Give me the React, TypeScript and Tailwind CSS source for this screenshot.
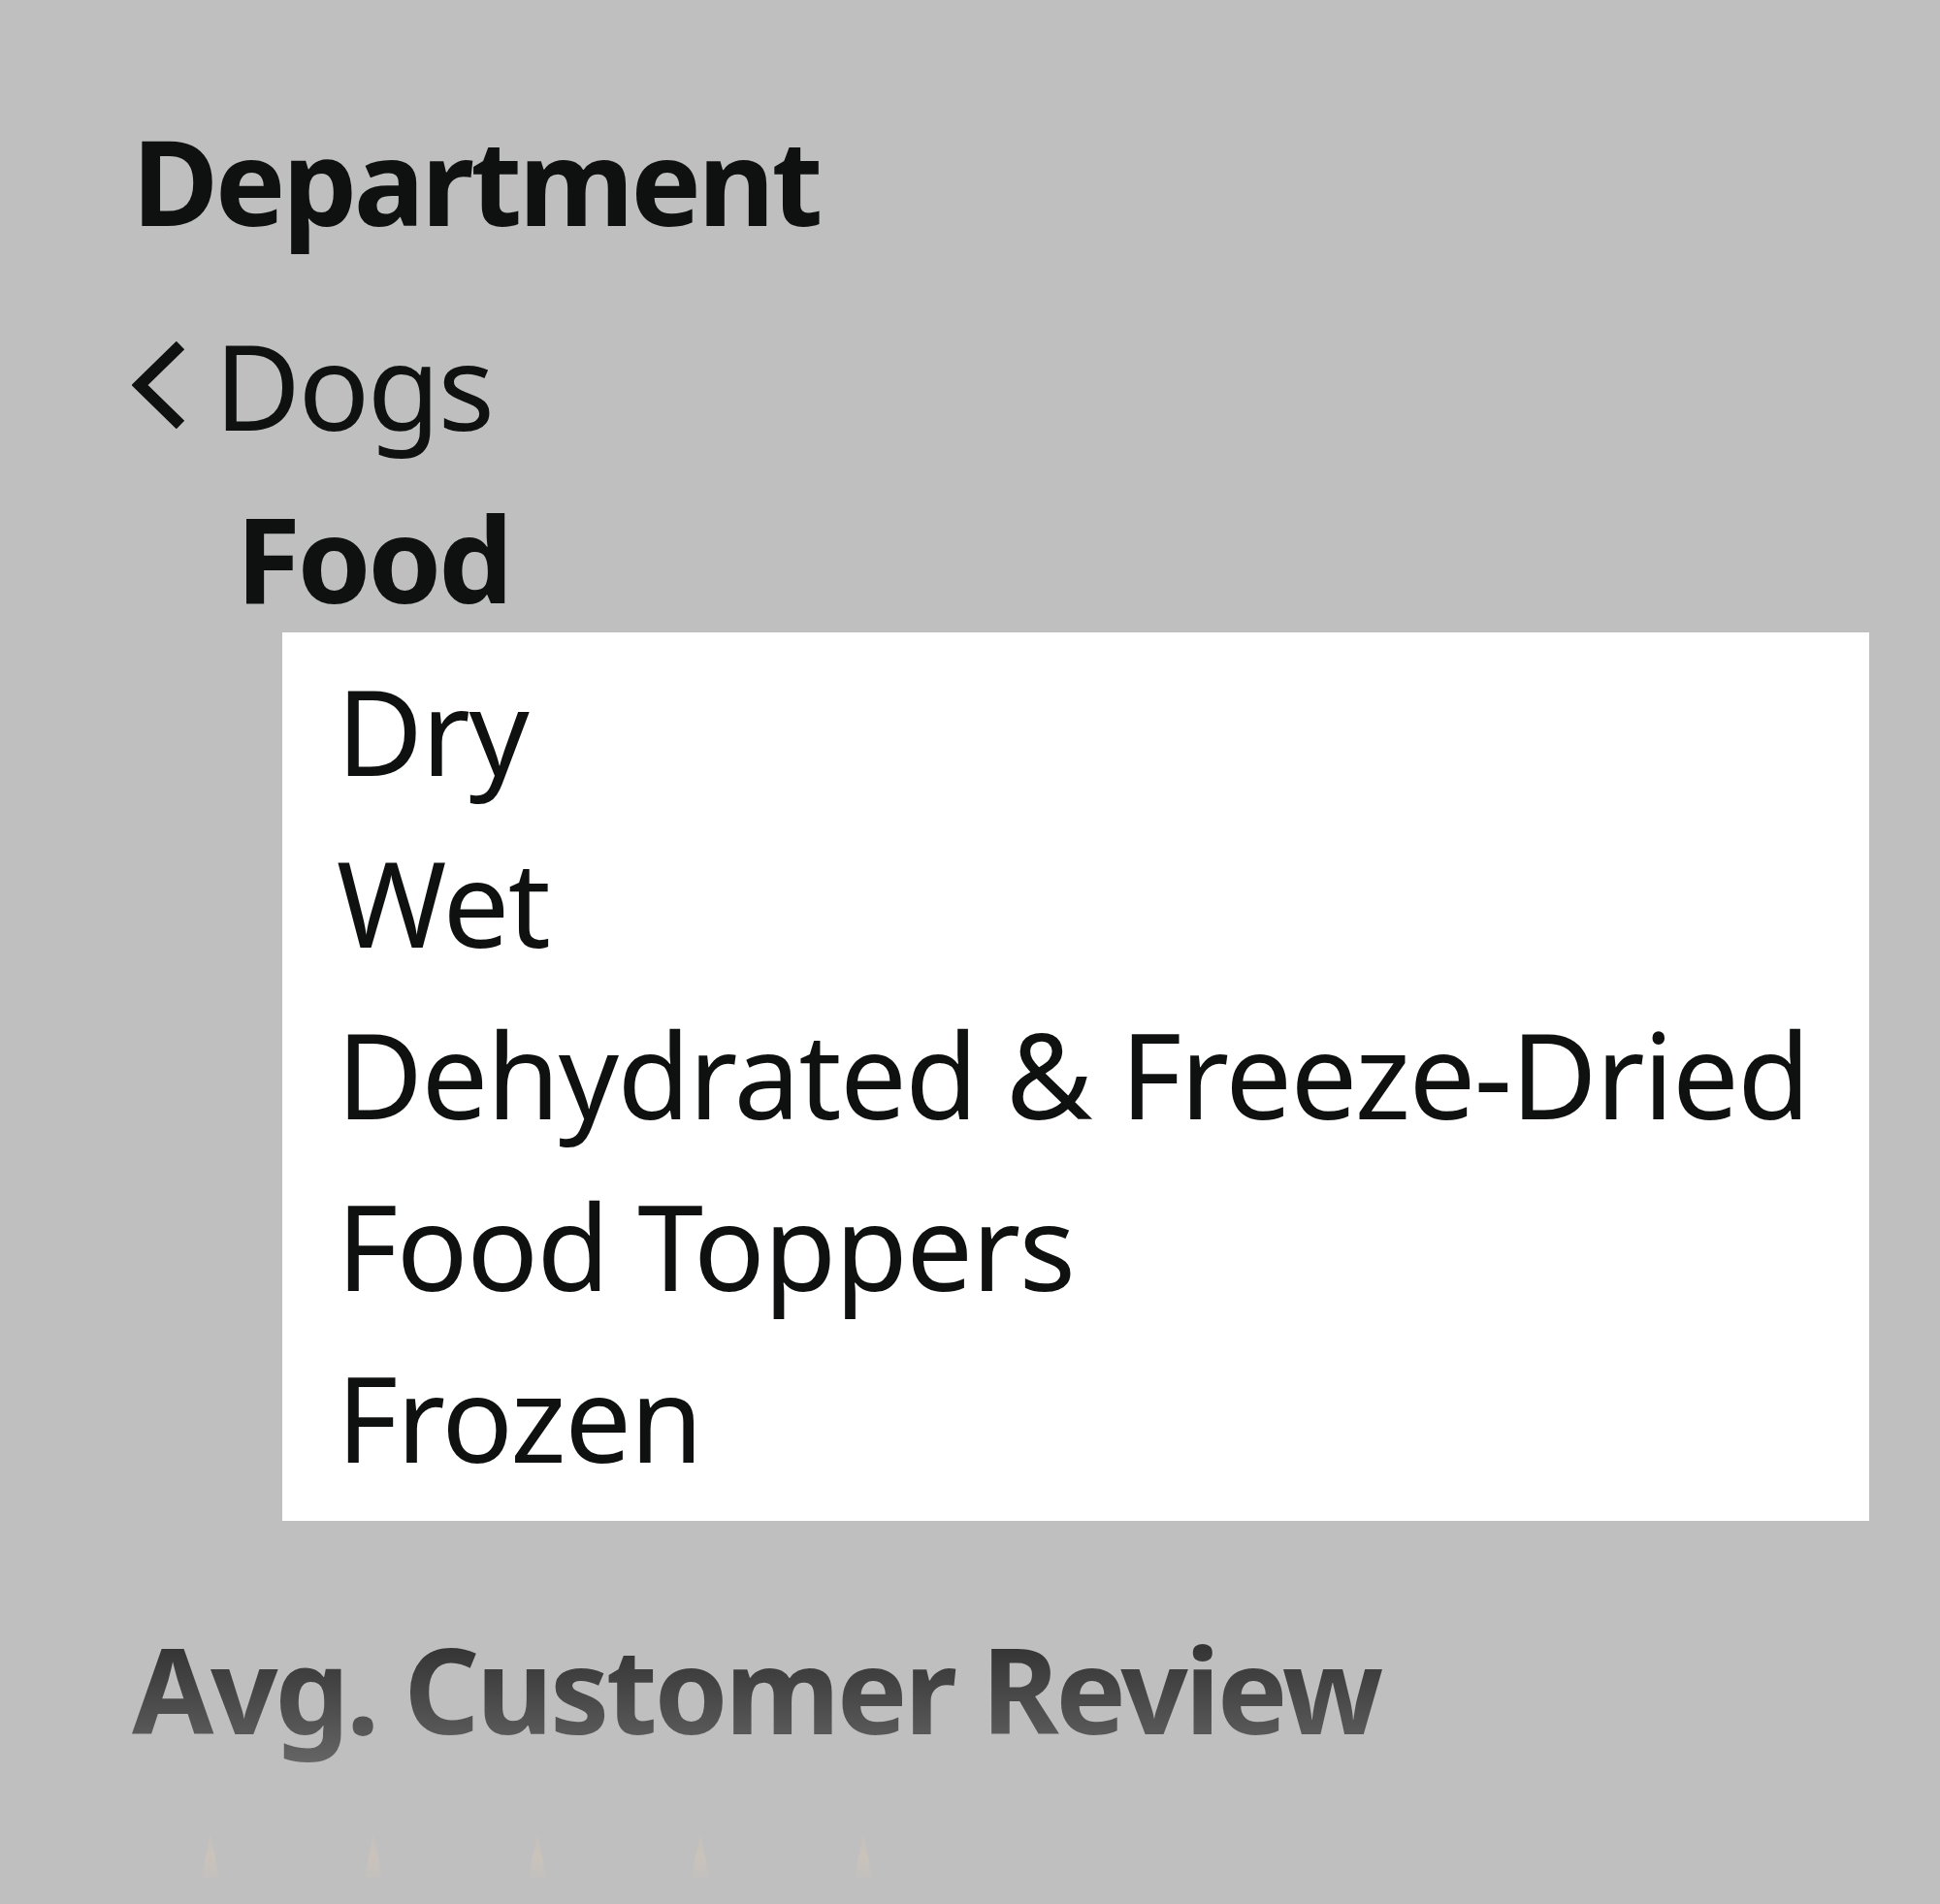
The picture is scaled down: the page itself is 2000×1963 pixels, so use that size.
const items = ["Dry", "Wet", "Dehydrated & Freeze-Dried", "Food Toppers", "Frozen"];

const starXs = [217, 385, 554, 722, 890];

function FadedStarTip() {
  return (
    <svg width="40" height="50" viewBox="0 0 40 50" className="block">
      <defs>
        <linearGradient id="tipFade" x1="0" y1="0" x2="0" y2="1">
          <stop offset="0" stopColor="#cbc3ba" stopOpacity="0.2" />
          <stop offset="0.55" stopColor="#cbc3ba" stopOpacity="0.9" />
          <stop offset="1" stopColor="#cbc3ba" stopOpacity="0.25" />
        </linearGradient>
      </defs>
      <path d="M20 0 L29 48 L11 48 Z" fill="url(#tipFade)" />
    </svg>
  );
}

export default function App() {
  return (
    <div className="w-[2000px] h-[1963px] overflow-hidden bg-[#bfbfbf] font-['Noto_Sans','Open_Sans',sans-serif] text-[#0f1111]">
      <div className="pl-[140px] pt-[125px]">
        <h2 className="-ml-[4px] text-[122px] leading-none font-bold tracking-[-3.5px]">Department</h2>

        <div className="mt-[89px] flex items-center -ml-[4px]">
          <svg width="56" height="90" viewBox="0 0 56 90" className="block shrink-0">
            <polyline points="50,4 8,45 50,86" fill="none" stroke="#0f1111" strokeWidth="12" strokeLinecap="butt" />
          </svg>
          <span className="ml-[29px] text-[122px] leading-none tracking-[-2.5px]">Dogs</span>
        </div>

        <div className="mt-[56px] pl-[103px] text-[122px] leading-none font-bold tracking-[-3.5px]">Food</div>

        <div className="mt-[16px] ml-[151px] w-[1636px] h-[916px] bg-white pt-[13px] pl-[56px]">
          {items.map((item) => (
            <div key={item} className="text-[122px] leading-[177px] whitespace-nowrap tracking-[-1.5px]">
              {item}
            </div>
          ))}
        </div>

        <h2 className="mt-[112px] -ml-[4px] text-[122px] leading-none font-bold tracking-[-3.4px] bg-gradient-to-b from-[#2e2e2e] to-[#6b6b6b] bg-clip-text text-transparent pb-[30px]">
          Avg. Customer Review
        </h2>
      </div>

      <div className="relative mt-[56px] h-[60px]">
        {starXs.map((x) => (
          <div key={x} className="absolute top-0" style={{ left: x - 20 }}>
            <FadedStarTip />
          </div>
        ))}
      </div>
    </div>
  );
}
